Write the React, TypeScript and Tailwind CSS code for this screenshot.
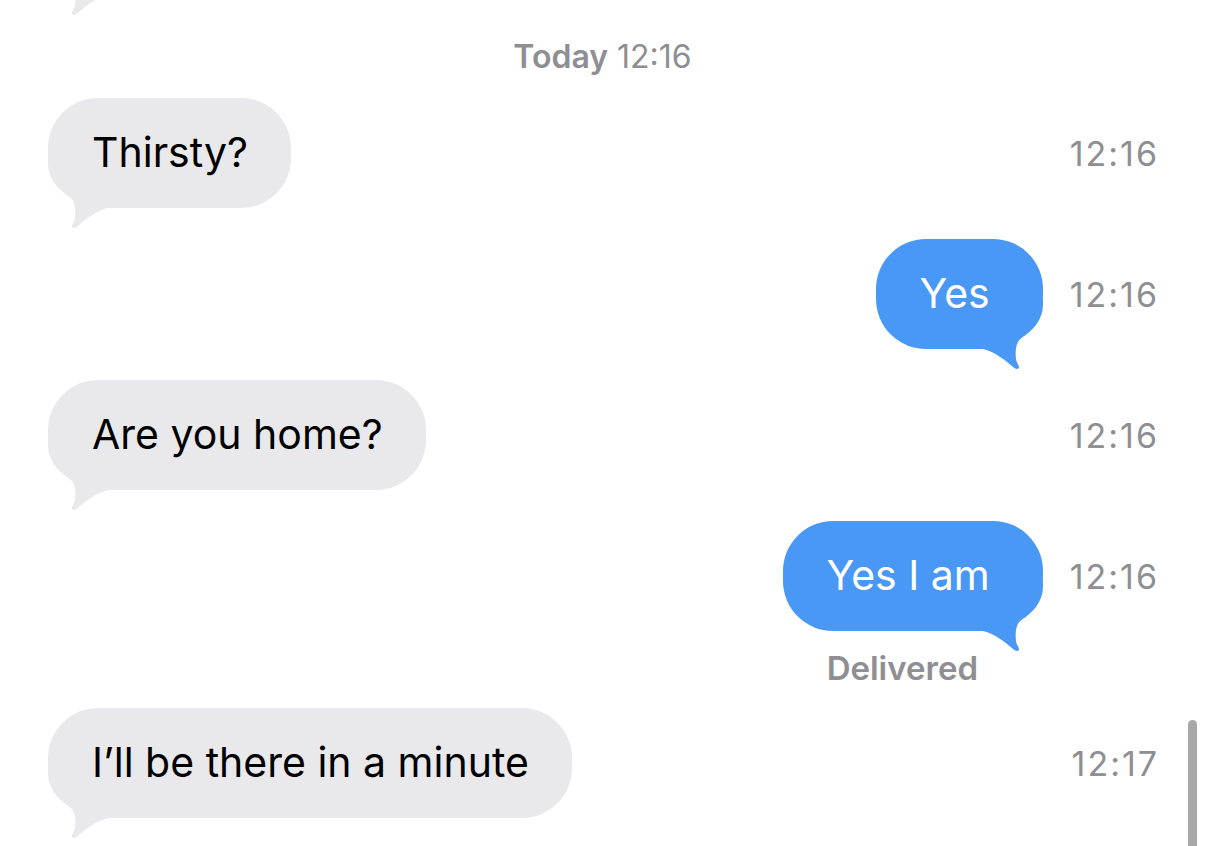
import React from "react";

const GRAY = "#e9e9eb";
const BLUE = "#4a98f5";

function Tail({ color, flip }: { color: string; flip?: boolean }) {
  return (
    <svg
      width="64"
      height="72"
      viewBox="0 0 64 72"
      className={flip ? "absolute right-0 bottom-[-22px]" : "absolute left-0 bottom-[-22px]"}
    >
      <g transform={flip ? "translate(64,0) scale(-1,1)" : undefined}>
        <path
          d="M0 0 L0 6 C0 20 10 32 22 39 C27 43 28 52 27 60 C26.5 64 24 66 24 68 C24 71 28 70.5 31 67 C38 61 48 53 60 50 L64 50 L64 0 Z"
          fill={color}
        />
      </g>
    </svg>
  );
}

function Bubble({ text, out }: { text: string; out?: boolean }) {
  return (
    <div
      className={
        out
          ? "relative h-[110px] flex items-center pl-[43px] pr-[53px] rounded-[50px] rounded-br-[55px] bg-[#4a98f5] text-white text-[41px]"
          : "relative h-[110px] flex items-center pl-[44px] pr-[43px] rounded-[50px] rounded-bl-[55px] bg-[#e9e9eb] text-black text-[41px]"
      }
    >
      <Tail color={out ? BLUE : GRAY} flip={out} />
      <span className="relative whitespace-nowrap">{text}</span>
    </div>
  );
}

function Time({ t }: { t: string }) {
  return (
    <div className="shrink-0 ml-[27px] -mr-[2px] text-right text-[34px] tracking-[2px] text-[#8e8e93]">{t}</div>
  );
}

function Row({ text, time, out, className }: { text: string; time?: string; out?: boolean; className?: string }) {
  return (
    <div className={"flex items-center h-[110px] " + (className ?? "")}>
      {out ? <div className="flex-1" /> : null}
      <Bubble text={text} out={out} />
      {!out ? <div className="flex-1" /> : null}
      {time ? <Time t={time} /> : null}
    </div>
  );
}

export default function App() {
  return (
    <div className="relative w-[1206px] h-[846px] overflow-hidden bg-white font-['Inter','Liberation_Sans',sans-serif]">
      <div className="flex flex-col pl-[48px] pr-[49px]">
        <div className="flex items-center h-[110px] -mt-[115px]">
          <div className="relative h-[110px] w-[240px] rounded-[50px] rounded-bl-[55px] bg-[#e9e9eb]">
            <Tail color={GRAY} />
          </div>
        </div>
        <div className="mt-[42px] h-[40px] flex items-center justify-center text-[32px] text-[#8e8e93]">
          <span className="font-semibold">Today</span>
          <span>&nbsp;12:16</span>
        </div>
        <Row className="mt-[21px]" text="Thirsty?" time="12:16" />
        <Row className="mt-[31px]" text="Yes" time="12:16" out />
        <Row className="mt-[31px]" text="Are you home?" time="12:16" />
        <Row className="mt-[31px]" text="Yes I am" time="12:16" out />
        <div className="mt-[19px] h-[38px] flex items-center justify-end pr-[179px] font-semibold text-[33px] text-[#8e8e93]">
          Delivered
        </div>
        <Row className="mt-[20px]" text="I’ll be there in a minute" time="12:17" />
      </div>
      <div className="absolute left-[1188px] top-[720px] w-[9px] h-[160px] rounded-full bg-[#a8a8a8]" />
    </div>
  );
}
